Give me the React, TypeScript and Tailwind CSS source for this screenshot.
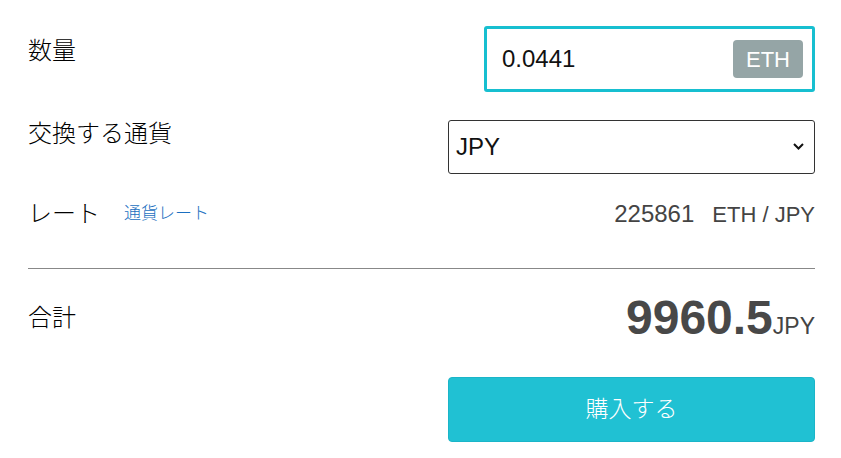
import React, { useState } from "react";

const font = {
  fontFamily: '"Liberation Sans", "Noto Sans CJK JP", sans-serif',
};

const App: React.FC = () => {
  const [amount, setAmount] = useState("0.0441");
  const [currency, setCurrency] = useState("JPY");

  return (
    <div className="w-[841px] h-[458px] bg-white text-[#111]" style={font}>
      <div className="ml-[28px] w-[787px] pt-[26px] flex flex-col">
        {/* 数量 */}
        <div className="flex justify-between items-start">
          <span className="mt-[7px] text-[24px] leading-[36px] font-light text-black">数量</span>
          <div className="w-[331px] h-[66px] border-[3px] border-[#17bfd0] rounded-[3px] flex items-center pl-[15px] pr-[9px]">
            <input
              value={amount}
              onChange={(e) => setAmount(e.target.value)}
              className="flex-1 min-w-0 text-[24px] outline-none bg-transparent text-[#111]"
            />
            <span className="h-[38px] px-[13px] flex items-center rounded-[4px] bg-[#95a5a6] text-white text-[22px]">
              ETH
            </span>
          </div>
        </div>

        {/* 交換する通貨 */}
        <div className="mt-[28px] flex justify-between items-start">
          <span className="-mt-[4px] text-[24px] leading-[36px] font-light text-black">交換する通貨</span>
          <div className="relative w-[367px] h-[54px]">
            <select
              value={currency}
              onChange={(e) => setCurrency(e.target.value)}
              className="appearance-none w-full h-full border border-[#333] rounded-[3px] pl-[7px] text-[24px] bg-white text-[#111] outline-none"
            >
              <option value="JPY">JPY</option>
              <option value="USD">USD</option>
            </select>
            <svg
              className="absolute right-[11px] top-[23px] pointer-events-none"
              width="11"
              height="7"
              viewBox="0 0 11 7"
              fill="none"
            >
              <path d="M1 1l4.5 4.5L10 1" stroke="#111" strokeWidth="2" />
            </svg>
          </div>
        </div>

        {/* レート */}
        <div className="mt-[22px] h-[36px] flex justify-between items-center">
          <div className="flex items-center">
            <span className="text-[24px] leading-[36px] font-light text-black">レート</span>
            <a className="ml-[24px] text-[17px] text-[#1a6fc0] font-light cursor-pointer">通貨レート</a>
          </div>
          <div className="flex items-baseline text-[#444]">
            <span className="text-[24px]">225861</span>
            <span className="ml-[18px] text-[22px]">ETH / JPY</span>
          </div>
        </div>

        <hr className="mt-[36px] border-0 border-t border-[#888]" />

        {/* 合計 */}
        <div className="mt-[25px] h-[48px] flex justify-between items-start">
          <span className="mt-[6px] text-[24px] leading-[36px] font-light text-black">合計</span>
          <div className="flex items-baseline text-[#484848]">
            <span className="text-[48px] leading-[48px] font-bold">9960.5</span>
            <span className="text-[23px] text-[#444]">JPY</span>
          </div>
        </div>

        <div className="mt-[35px] flex justify-end">
          <button className="w-[367px] h-[65px] rounded-[4px] bg-[#20c1d3] border border-[#1bb5c8] text-white text-[23px] font-light">
            購入する
          </button>
        </div>
      </div>
    </div>
  );
};

export default App;
